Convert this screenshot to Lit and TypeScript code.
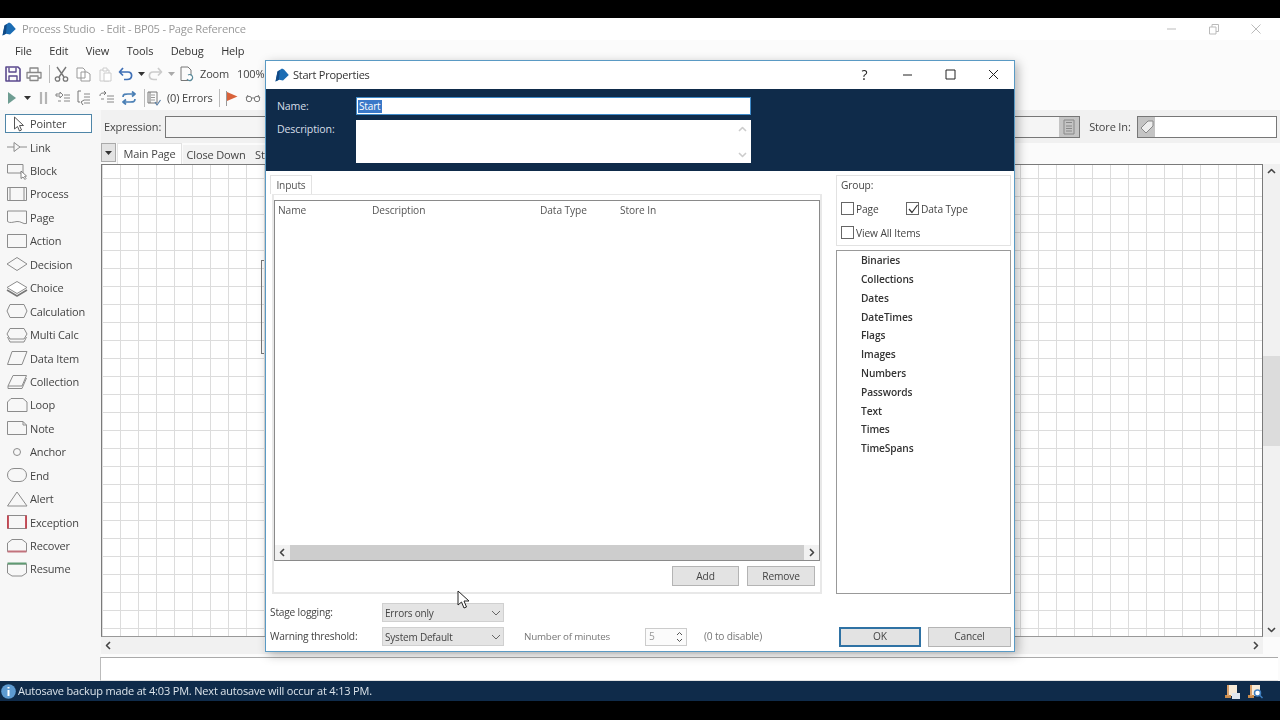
import { LitElement, html, css, svg } from "lit";
import { customElement } from "lit/decorators.js";

const ic = (w: number, h: number, body: unknown, cls = "") =>
  html`<svg class=${cls} width=${w} height=${h} viewBox="0 0 ${w} ${h}" fill="none" stroke-linejoin="round">${body}</svg>`;

const logo = ic(14, 14, svg`<path d="M.5 13.500 L2.500 3.500 L7 .5 L9 1.500 L13.800 7 L8 12.500 L4 11.800 Z" fill="#1c6db4"/><path d="M.5 13.500 L2.500 3.500 L4.800 2 L4 11.800 Z" fill="#124a85"/>`);

const S = "#8c8c8c";
const pal: [string, unknown][] = [
  ["Link", svg`<path d="M1 9H8M8 4.5L14 9L8 13.5ZM14 9H21" stroke=${S}/>`],
  ["Block", svg`<path d="M1.500 2.500H17V11H1.500Z" stroke=${S}/><path d="M15 9V16.500L17 15L19 17.500L20 16.500L18.500 14.500L20.500 14Z" fill="#fff" stroke="#666" stroke-width=".8"/>`],
  ["Process", svg`<path d="M1.500 2.500H20.500V15.500H1.500ZM4 2.500V15.500M18 2.500V15.500" stroke=${S}/>`],
  ["Page", svg`<path d="M1.500 3H20.500V15.500C17 16.500 15 13 11 13.500S4 15.500 1.500 13.500Z" stroke=${S}/>`],
  ["Action", svg`<path d="M1.500 2.500H20.500V15.500H1.500Z" stroke=${S}/>`],
  ["Decision", svg`<path d="M1 9L11 2.500L21 9L11 15.500Z" stroke=${S}/>`],
  ["Choice", svg`<path d="M1 11L11 17L21 11" stroke="#777" stroke-width="1.600"/><path d="M1 8.500L11 2.500L21 8.500L11 14.500Z" stroke=${S} fill="#fff"/>`],
  ["Calculation", svg`<path d="M4 2.500H18L21 9L18 15.500H4L1 9Z" stroke=${S}/>`],
  ["Multi Calc", svg`<path d="M4 2.500H18L21 8L18 13H4L1 8ZM1.500 11L4 16H18L20.500 11" stroke=${S}/>`],
  ["Data Item", svg`<path d="M6 2.500H21L16 15.500H1.500Z" stroke=${S}/>`],
  ["Collection", svg`<path d="M7 2.500H20.500L16 13H2ZM2 13V15.500H16L20.500 5" stroke=${S}/>`],
  ["Loop", svg`<path d="M5 2.500H17L21 6V15.500H1.500V6Z" stroke=${S}/>`],
  ["Note", svg`<path d="M1.500 2.500H17L20.500 6V15.500H1.500ZM17 2.500V6H20.500" stroke=${S}/>`],
  ["Anchor", svg`<circle cx="11" cy="9" r="3.500" stroke=${S}/>`],
  ["End", svg`<rect x="1.500" y="2.500" width="19" height="13" rx="6.500" stroke=${S}/>`],
  ["Alert", svg`<path d="M11 2L21 16H1.500Z" stroke=${S}/>`],
  ["Exception", svg`<path d="M1.500 2.500H20.500V15.500H1.500Z" stroke=${S}/><path d="M2 2.500V15.500M20 2.500V15.500" stroke="#c2424e" stroke-width="1.800"/>`],
  ["Recover", svg`<path d="M1.500 6L6 2.500H16L20.500 6V14.500H1.500Z" stroke=${S}/><path d="M1.500 14.500H20.500" stroke="#c2727c" stroke-width="2"/>`],
  ["Resume", svg`<path d="M1.500 4V13L6 16H16L20.500 13V4Z" stroke=${S}/><path d="M1.500 3.500H20.500" stroke="#5f9a72" stroke-width="2"/>`],
];

const pointerIcon = ic(12, 16, svg`<path d="M1.500 1V13L4.500 10.500L6.500 15L8.500 14L6.500 9.500H10.500Z" fill="#fff" stroke="#555"/>`);
const caret = ic(7, 4, svg`<path d="M0 0H7L3.500 4Z" fill="#333"/>`);
const caretPale = ic(7, 4, svg`<path d="M0 0H7L3.500 4Z" fill="#aaa"/>`);
const sep = html`<span class="sep"></span>`;
const chev = (d: string, c = "#444", w = 1.6) => ic(9, 9, svg`<path d=${d} stroke=${c} stroke-width=${w}/>`);
const L = "M6 1L2.500 4.500L6 8", R = "M3 1L6.500 4.500L3 8", U = "M1 6L4.500 2.500L8 6", D = "M1 3L4.500 6.500L8 3";
const selChev = ic(10, 6, svg`<path d="M1 1L5 5L9 1" stroke="#666"/>`);
const lines = svg`<path d="M7 4H13M7 7H13M7 10H13M7 13H13" stroke="#888"/>`;

const tb1 = [
  ic(16, 16, svg`<path d="M1 1H13L15 3V15H1Z" stroke="#5b4a8e" stroke-width="1.600"/><path d="M4 1.500V6H11V1.500M4 15V10H12V15" stroke="#5b4a8e" stroke-width="1.400"/>`),
  ic(16, 16, svg`<path d="M4 6V2H12V6M4 12H1V6.500H15V12H12M4 10H12V14.500H4Z" stroke="#888" stroke-width="1.300"/>`),
  sep,
  ic(15, 16, svg`<path d="M3 1L10 11M12 1L5 11" stroke="#777" stroke-width="1.400"/><circle cx="3.500" cy="13" r="2.200" stroke="#777" stroke-width="1.300"/><circle cx="11.500" cy="13" r="2.200" stroke="#777" stroke-width="1.300"/>`),
  ic(15, 15, svg`<path d="M1 1H7L9 3V11H1ZM5 5H11L14 7V14H5Z" stroke="#999" fill="#fff"/>`),
  ic(13, 15, svg`<path d="M1 3H10V14H1Z" stroke="#ccc"/><path d="M4 1H8V4H4ZM5 6H12V14H5Z" stroke="#ccc" fill="#fff"/>`),
  ic(15, 14, svg`<path d="M5 1L1.500 5L5 8.500M2 5H10C15 5 15 12.500 9 12.500H6" stroke="#3f6fb5" stroke-width="1.700"/>`),
  caret,
  ic(15, 14, svg`<path d="M10 1L13.500 5L10 8.500M13 5H5C0 5 0 12.500 6 12.500H9" stroke="#ccc" stroke-width="1.700"/>`),
  caretPale,
  ic(14, 16, svg`<path d="M1 1H8L11 4V14.500H1Z" stroke="#777"/><path d="M8 9A3 3 0 1 1 7 13" stroke="#5a8a9a" fill="#fff" stroke-width="1.200"/>`),
];
const tb2a = [
  ic(10, 14, svg`<path d="M1 1L9 7L1 13Z" fill="#6e9d92"/>`),
  caret,
  ic(9, 14, svg`<path d="M2 1V13M7 1V13" stroke="#b5b5b5" stroke-width="2.200"/>`),
  ic(16, 14, svg`<path d="M1 3H5V1L8 4L5 7V5H1Z" stroke="#777" stroke-width=".9"/><path d="M9 4H15M9 7H15M9 10H15M3 10H6" stroke="#888"/>`),
  ic(16, 16, svg`<path d="M4 1H1V12H3M6 15L4 12L7 10" stroke="#777"/>${lines}`),
  ic(16, 14, svg`<path d="M1 5C1 2 3 2 6 2M5 0L7 2L5 4" stroke="#777"/><path d="M8 5H15M8 8H15M8 11H15M2 8H5" stroke="#888"/>`),
  ic(16, 14, svg`<path d="M2 6C2 3 4 3 7 3H13M11 0.500L14 3L11 5.500M14 8C14 11 12 11 9 11H3M5 8.500L2 11L5 13.500" stroke="#4a7fb5" stroke-width="1.700"/>`),
  sep,
  ic(14, 15, svg`<path d="M1 1H10V12H1ZM3 1V12" stroke="#777"/><path d="M4 4H8M4 6.500H8M4 9H8" stroke="#999"/><path d="M8 11L10 14L13.500 9" stroke="#5a7fa5" stroke-width="1.200"/>`),
];

const groups = ["Binaries","Collections","Dates","DateTimes","Flags","Images","Numbers","Passwords","Text","Times","TimeSpans"];
const check = (on: boolean) => html`<span class="check">${on ? ic(12, 12, svg`<path d="M2 6L5 9.500L10.500 2" stroke="#333" stroke-width="1.200"/>`) : ""}</span>`;

@customElement("app-root")
export class AppRoot extends LitElement {
  static styles = css`
    :host { display: block; width: 1280px; height: 720px; background: #000; overflow: hidden; position: relative;
      font: 11px/1.2 "Open Sans", "Noto Sans", sans-serif; letter-spacing: -.15px; color: #333; }
    * { box-sizing: border-box; }
    svg { display: block; flex: none; }
    .app { display: flex; flex-direction: column; height: 683px; margin-top: 18px; background: #fbfbfb; filter: blur(.25px); }
    .title { flex: 0 0 22px; display: flex; align-items: center; padding-left: 2px; background: #fff; color: #9a9a9a; font-size: 11.2px; letter-spacing: -.25px; }
    .title .t { margin-left: 6px; white-space: pre; flex: 1; }
    .win { display: grid; grid-template-columns: 42px 42px 42px; margin-right: 3px; justify-items: center; }
    .menu { flex: 0 0 22px; display: flex; align-items: center; gap: 17.5px; padding-left: 15px; color: #333; }
    .tb { flex: 0 0 24px; display: grid; align-items: center; justify-items: center; }
    .tb1 { grid-template-columns: 20px 22px 8px 16px 28px 16px 24px 8px 20px 12px 20px 37px 70px; padding-left: 3px; }
    .tb2 { grid-template-columns: 20px 10px 22px 18px 26px 18px 26px 4px 16px 52px 10px 14px 30px; padding-left: 2px; }
    .tb .txt { justify-self: start; padding-left: 3px; white-space: nowrap; color: #444; }
    .tb2 .txt { padding-left: 5px; }
    .sep { width: 1px; height: 18px; background: #bbb; display: block; }
    .main { flex: 1; display: flex; min-height: 0; }
    .palette { width: 101px; padding-top: 2px; flex: none; background: #f7f7f7; }
    .row { height: 23.45px; display: flex; align-items: center; gap: 2px; padding-left: 6px; color: #444; }
    .row.ptr { padding-left: 5px; }
    .ptrbtn { width: 87px; height: 19px; display: flex; align-items: center; gap: 5px; padding-left: 7px; border: 1.500px solid #4f86a8; background: #fff; }
    .work { flex: 1; display: flex; flex-direction: column; min-width: 0; }
    .expr { flex: 0 0 33px; display: flex; align-items: center; padding: 0 3px 0 3px; background: #f1f1f1; }
    .expr .lab { width: 61px; color: #444; }
    .field { height: 22px; border: 1px solid #777; background: #fff; display: flex; }
    .field.a { width: 916px; justify-content: flex-end; background: #f5f5f5; }
    .calc { width: 20px; background: #c4c4c4; display: flex; align-items: center; justify-content: center; }
    .expr .lab2 { margin-left: 9px; width: 48px; color: #444; }
    .field.b { width: 140px; }
    .tag { width: 17px; background: #c4c4c4; display: flex; align-items: center; justify-content: center; }
    .tabs { flex: 0 0 21px; display: flex; align-items: flex-end; background: #fbfbfb; }
    .drop { width: 15px; height: 19px; margin-bottom: 2px; background: #e3e3e3; border: 1px solid #aaa; display: flex; align-items: center; justify-content: center; }
    .tab { height: 19px; display: flex; align-items: center; justify-content: center; color: #444; background: #f2f2f2; }
    .tab.on { height: 21px; width: 65px; margin-left: 1px; background: #fff; border: 1px solid #e2e2e2; border-bottom: 0; }
    .tab.o2 { width: 66px; margin-left: 1px; }
    .tab.o3 { padding-left: 6px; }
    .cv { flex: 1; display: grid; grid-template-columns: 1fr 17px; grid-template-rows: 1fr 17px; min-height: 0; }
    .canvas { border: 1px solid #7a7a7a; border-bottom-color: #999; position: relative; background-color: #fff;
      background-image: linear-gradient(to right, #dcdcdc 1px, transparent 1px), linear-gradient(to bottom, #dcdcdc 1px, transparent 1px);
      background-size: 18px 18px; background-position: 0 13px; }
    .stub { position: absolute; left: 159px; top: 95px; width: 3px; height: 94px; border-left: 1px solid #777; border-top: 1px solid #777; border-bottom: 1px solid #777; }
    .vs { background: #f1f1f1; display: flex; flex-direction: column; align-items: center; justify-content: space-between; padding: 3px 0; position: relative; }
    .thumb { position: absolute; left: 0; right: 0; top: 192px; height: 90px; background: #dcdcdc; }
    .hs { background: #f1f1f1; display: flex; align-items: center; justify-content: space-between; padding: 0 3px; }
    .corner { background: #fbfbfb; }
    .out { flex: 0 0 24px; margin: 3px 2px 0 -1px; background: #fff; border-top: 1.500px solid #aaa; border-left: 1px solid #bbb; border-bottom: 1px solid #e2e2e2; }
    .status { flex: 0 0 20px; display: flex; align-items: center; padding-left: 1px; background: #0f2b4a; color: #dbe3ea; letter-spacing: -.18px; }
    .status .m { flex: 1; margin-left: 2px; white-space: nowrap; }
    .logs { display: flex; gap: 7px; margin-right: 17px; }

    .dlg { position: absolute; left: 265px; top: 60px; width: 750px; height: 592px; background: #fff; border: 1px solid #5a9ac4; box-shadow: 3px 3px 10px rgba(0,0,0,.28); display: flex; flex-direction: column; filter: blur(.25px); }
    .dt { flex: 0 0 28px; display: flex; align-items: center; padding-left: 9px; color: #333; }
    .dt .t { margin-left: 4px; flex: 1; letter-spacing: -.25px; }
    .dwin { display: grid; grid-template-columns: repeat(4, 43px); justify-items: center; align-items: center; margin-right: -1px; }
    .q { font-size: 14px; color: #222; }
    .head { flex: 0 0 82px; background: #0f2b4a; display: grid; grid-template-columns: 79px 395px; grid-template-rows: 18px 43px; row-gap: 5px; padding: 8px 0 0 11px; color: #d5dee7; font-size: 10.6px; }
    .head .l { align-self: center; }
    .head .l2 { align-self: start; padding-top: 3px; }
    .name { background: #fff; border: 1px solid #3f8ac8; display: flex; align-items: center; padding-left: 1px; font-size: 10px; }
    .sel { background: #3a78c8; color: #fff; padding: 0 1px; line-height: 13px; }
    .desc { background: #fff; display: flex; flex-direction: column; align-items: flex-end; justify-content: space-between; padding: 5px 4px 4px; }
    .body { flex: 0 0 419px; margin-top: 4px; display: grid; grid-template-columns: 550px 175px; column-gap: 14px; padding-left: 6px; }
    .left { display: flex; flex-direction: column; }
    .itab { width: 42px; height: 19px; margin-left: -2px; border: 1px solid #e2e2e2; border-bottom: 0; display: flex; align-items: center; justify-content: center; color: #555; font-size: 10.2px; }
    .panel { flex: 1; border: 2px solid #e8e8e8; border-top-width: 1px; padding: 5px 0 0 0; display: flex; flex-direction: column; }
    .list { height: 361px; border: 1px solid #8a8a8a; border-bottom-width: 1.500px; display: flex; flex-direction: column; }
    .lh { display: grid; grid-template-columns: 94px 168px 80px auto; height: 19px; align-items: center; padding-left: 3px; color: #555; font-size: 10.2px; letter-spacing: -.1px; }
    .lh span { height: 100%; display: flex; align-items: center; }
    .sp { flex: 1; }
    .lhs { height: 15px; background: #cdcdcd; display: flex; justify-content: space-between; align-items: center; }
    .arr { width: 15px; height: 15px; background: #f1f1f1; display: flex; align-items: center; justify-content: center; }
    .acts { display: flex; justify-content: flex-end; gap: 8px; padding: 5px 5px 0 0; }
    .btn { height: 20px; background: #e3e3e3; border: 1px solid #b4b4b4; display: flex; align-items: center; justify-content: center; color: #444; font-size: 10.2px; }
    .w67 { width: 67px; } .w68 { width: 68px; }
    .right { display: flex; flex-direction: column; gap: 4px; }
    .group { flex: 0 0 71px; border: 1px solid #e2e2e2; padding: 3px 0 0 4px; color: #444; font-size: 10.2px; letter-spacing: -.1px; }
    .chk { display: grid; grid-template-columns: 65px auto; margin-top: 11px; }
    .chk > div { display: flex; align-items: center; gap: 2px; }
    .chk.one { grid-template-columns: auto; margin-top: 11px; }
    .check { width: 13px; height: 13px; border: 1px solid #666; display: block; background: #fff; }
    .tree { flex: 1; border: 1px solid #999; border-top-width: 1.500px; padding: 0 0 0 24px; color: #333; font-weight: 600; font-size: 10.2px; letter-spacing: -.1px; }
    .tree div { height: 18.800px; display: flex; align-items: center; }
    .foot { flex: 1; padding: 9px 3px 0 4px; display: flex; flex-direction: column; gap: 5px; font-size: 10.2px; letter-spacing: -.2px; color: #444; }
    .fr { display: flex; align-items: center; height: 19px; }
    .fr .l { width: 112px; }
    .select { width: 122px; height: 19px; background: #e4e4e4; border: 1px solid #d0d0d0; display: flex; align-items: center; justify-content: space-between; padding: 0 2px; color: #444; font-size: 10px; }
    .mut { color: #777; }
    .nm { margin-left: 20px; width: 121px; font-size: 9.8px; }
    .spin { width: 42px; height: 18px; border: 1px solid #ccc; display: flex; align-items: center; justify-content: space-between; padding: 0 3px; background: #fbfbfb; color: #999; }
    .dis { margin-left: 17px; width: 135px; }
    .ok { width: 82px; height: 20px; border: 2px solid #2f72a4; }
    .cancel { width: 83px; margin-left: 7px; }
    .cursor { position: absolute; left: 457px; top: 590px; }
  `;

  render() {
    return html`
      <div class="app">
        <div class="title">${logo}<span class="t">Process Studio  - Edit - BP05 - Page Reference</span>
          <div class="win">
            ${ic(10, 10, svg`<path d="M0 5H9" stroke="#bbb"/>`)}
            ${ic(10, 11, svg`<path d="M.5 3H7V10H.5ZM3 3V.5H9.500V7.500H7" stroke="#bbb"/>`)}
            ${ic(10, 10, svg`<path d="M.5 .5L9.500 9.500M9.500 .5L.5 9.500" stroke="#bbb"/>`)}
          </div>
        </div>
        <div class="menu"><span>File</span><span>Edit</span><span>View</span><span>Tools</span><span>Debug</span><span>Help</span></div>
        <div class="tb tb1">${tb1}<span class="txt">Zoom</span><span class="txt">100%</span></div>
        <div class="tb tb2">${tb2a}<span class="txt">(0) Errors</span>${sep}
          ${ic(13, 15, svg`<path d="M1.500 0V15" stroke="#999"/><path d="M2 1L12.500 5.500L2 10Z" fill="#d8623a"/>`)}
          ${ic(16, 10, svg`<circle cx="4" cy="6" r="2.700" stroke="#777"/><circle cx="12" cy="6" r="2.700" stroke="#777"/><path d="M6.500 5H9.500M1 5L3 2M15 5L13 2" stroke="#777"/>`)}
        </div>
        <div class="main">
          <div class="palette">
            <div class="row ptr"><div class="ptrbtn">${pointerIcon}<span>Pointer</span></div></div>
            ${pal.map(([n, i]) => html`<div class="row">${ic(22, 18, i)}<span>${n}</span></div>`)}
          </div>
          <div class="work">
            <div class="expr">
              <span class="lab">Expression:</span>
              <div class="field a"><div class="calc">${ic(12, 16, svg`<path d="M1 1H11V15H1ZM3 3.500H9M3 7H9M3 9.500H9M3 12H9" stroke="#888"/>`)}</div></div>
              <span class="lab2">Store In:</span>
              <div class="field b"><div class="tag">${ic(14, 14, svg`<path d="M1 8L8 1H13V6L6 13Z" fill="#eee" stroke="#888"/>`)}</div></div>
            </div>
            <div class="tabs">
              <div class="drop">${caret}</div>
              <div class="tab on">Main Page</div>
              <div class="tab o2">Close Down</div>
              <div class="tab o3">St</div>
            </div>
            <div class="cv">
              <div class="canvas"><div class="stub"></div></div>
              <div class="vs">${chev(U)}<div class="thumb"></div>${chev(D)}</div>
              <div class="hs">${chev(L)}${chev(R)}</div>
              <div class="corner"></div>
            </div>
            <div class="out"></div>
          </div>
        </div>
        <div class="status">
          ${ic(15, 15, svg`<circle cx="7.500" cy="7.500" r="7.300" fill="#5d9ad0"/><path d="M7.500 3V4.600M7.500 6V12" stroke="#fff" stroke-width="2"/>`)}
          <span class="m">Autosave backup made at 4:03 PM. Next autosave will occur at 4:13 PM.</span>
          <div class="logs">
            ${ic(16, 15, svg`<path d="M3 1H13V12H3Z" fill="#f6ead8"/><path d="M1 11H7V14H1Z" fill="#c98a4a"/><path d="M3 1H5V12H3Z" fill="#d9a06a"/><path d="M8 9H16V15H8Z" fill="#dfe6ee"/>`)}
            ${ic(16, 15, svg`<path d="M3 1H13V12H3Z" fill="#f6ead8"/><path d="M1 11H7V14H1Z" fill="#c98a4a"/><path d="M3 1H5V12H3Z" fill="#d9a06a"/><circle cx="10.500" cy="9" r="3" fill="#fff" stroke="#3f7fc0" stroke-width="1.500"/><path d="M12.500 11L15.500 14" stroke="#3f7fc0" stroke-width="1.500"/>`)}
          </div>
        </div>
      </div>

      <div class="dlg">
        <div class="dt">${logo}<span class="t">Start Properties</span>
          <div class="dwin">
            <span class="q">?</span>
            ${ic(11, 11, svg`<path d="M1 6H10" stroke="#222"/>`)}
            ${ic(11, 11, svg`<path d="M1 1H10V10H1Z" stroke="#222"/>`)}
            ${ic(11, 11, svg`<path d="M1 1L10 10M10 1L1 10" stroke="#222"/>`)}
          </div>
        </div>
        <div class="head">
          <span class="l">Name:</span>
          <div class="name"><span class="sel">Start</span></div>
          <span class="l2">Description:</span>
          <div class="desc">${chev(U, "#ccc")}${chev(D, "#ccc")}</div>
        </div>
        <div class="body">
          <div class="left">
            <div class="itab">Inputs</div>
            <div class="panel">
              <div class="list">
                <div class="lh"><span>Name</span><span>Description</span><span>Data Type</span><span>Store In</span></div>
                <div class="sp"></div>
                <div class="lhs"><div class="arr">${chev(L)}</div><div class="arr">${chev(R)}</div></div>
              </div>
              <div class="acts"><div class="btn w67">Add</div><div class="btn w68">Remove</div></div>
            </div>
          </div>
          <div class="right">
            <div class="group">
              <div>Group:</div>
              <div class="chk"><div>${check(false)}<span>Page</span></div><div>${check(true)}<span>Data Type</span></div></div>
              <div class="chk one"><div>${check(false)}<span>View All Items</span></div></div>
            </div>
            <div class="tree">${groups.map((g) => html`<div>${g}</div>`)}</div>
          </div>
        </div>
        <div class="foot">
          <div class="fr"><span class="l">Stage logging:</span><div class="select"><span>Errors only</span>${selChev}</div></div>
          <div class="fr"><span class="l">Warning threshold:</span><div class="select"><span>System Default</span>${selChev}</div>
            <span class="nm mut">Number of minutes</span>
            <div class="spin"><span>5</span>${ic(7, 12, svg`<path d="M1 4L3.500 1.500L6 4M1 8L3.500 10.500L6 8" stroke="#555"/>`)}</div>
            <span class="dis mut">(0 to disable)</span>
            <div class="btn ok">OK</div>
            <div class="btn w68 cancel">Cancel</div>
          </div>
        </div>
      </div>
      <div class="cursor">${ic(13, 19, svg`<path d="M1 1V15L4.500 12L7 18L9.500 17L7 11H12Z" fill="#fff" stroke="#222"/>`)}</div>
    `;
  }
}
